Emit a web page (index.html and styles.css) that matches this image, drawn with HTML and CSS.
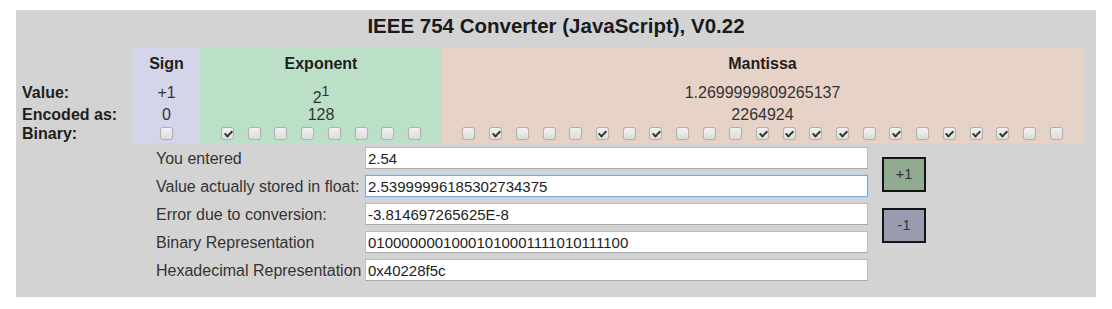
FILE: index.html
```html
<!DOCTYPE html>
<html>
<head>
<meta charset="utf-8">
<title>IEEE 754 Converter</title>
<link rel="stylesheet" href="styles.css">
</head>
<body>
<div class="panel">
  <div class="title">IEEE 754 Converter (JavaScript), V0.22</div>
  <div class="fields">
    <div class="col col-labels">
      <div class="r r-head"></div>
      <div class="r r-val">Value:</div>
      <div class="r r-enc">Encoded as:</div>
      <div class="r r-bin">Binary:</div>
    </div>
    <div class="col col-sign">
      <div class="r r-head">Sign</div>
      <div class="r r-val">+1</div>
      <div class="r r-enc">0</div>
      <div class="r r-bin"><span class="cb"></span></div>
    </div>
    <div class="col col-exp">
      <div class="r r-head">Exponent</div>
      <div class="r r-val exp-val"><span>2<sup>1</sup></span></div>
      <div class="r r-enc">128</div>
      <div class="r r-bin">
        <span class="cb on"></span><span class="cb"></span><span class="cb"></span><span class="cb"></span><span class="cb"></span><span class="cb"></span><span class="cb"></span><span class="cb"></span>
      </div>
    </div>
    <div class="col col-man">
      <div class="r r-head">Mantissa</div>
      <div class="r r-val">1.2699999809265137</div>
      <div class="r r-enc">2264924</div>
      <div class="r r-bin">
        <span class="cb"></span><span class="cb on"></span><span class="cb"></span><span class="cb"></span><span class="cb"></span><span class="cb on"></span><span class="cb"></span><span class="cb on"></span><span class="cb"></span><span class="cb"></span><span class="cb"></span><span class="cb on"></span><span class="cb on"></span><span class="cb on"></span><span class="cb on"></span><span class="cb"></span><span class="cb on"></span><span class="cb"></span><span class="cb on"></span><span class="cb on"></span><span class="cb on"></span><span class="cb"></span><span class="cb"></span>
      </div>
    </div>
  </div>
  <div class="io">
    <div class="io-grid">
      <label class="io-label">You entered</label>
      <input class="io-input" type="text" value="2.54">
      <label class="io-label">Value actually stored in float:</label>
      <input class="io-input focused" type="text" value="2.53999996185302734375">
      <label class="io-label">Error due to conversion:</label>
      <input class="io-input" type="text" value="-3.814697265625E-8">
      <label class="io-label">Binary Representation</label>
      <input class="io-input" type="text" value="01000000010001010001111010111100">
      <label class="io-label">Hexadecimal Representation</label>
      <input class="io-input" type="text" value="0x40228f5c">
    </div>
    <div class="btns">
      <button class="btn btn-plus">+1</button>
      <button class="btn btn-minus">-1</button>
    </div>
  </div>
</div>
</body>
</html>
```
FILE: styles.css
```css
html, body {
  margin: 0;
  padding: 0;
  background: #ffffff;
}
body {
  font-family: "Liberation Sans", Arial, sans-serif;
  color: #222;
}
.panel {
  margin: 10px 0 0 16px;
  width: 1080px;
  height: 287px;
  box-sizing: border-box;
  padding: 0 6px;
  background: #d3d3d3;
}
.title {
  height: 38px;
  line-height: 31px;
  text-align: center;
  font-weight: bold;
  font-size: 20.5px;
  color: #1a1a1a;
}
.fields {
  display: flex;
}
.col {
  display: flex;
  flex-direction: column;
}
.col-labels { width: 111px; font-weight: bold; font-size: 16px; color: #1e1e1e; }
.col-sign { width: 67px; background: #d5d5ea; }
.col-exp { width: 242px; background: #bbe0c7; }
.col-man { width: 641px; background: #e6d2c6; }
.r {
  display: flex;
  align-items: center;
  font-size: 16px;
  color: #333;
}
.col-labels .r { color: #1e1e1e; }
.col-sign .r, .col-exp .r, .col-man .r { justify-content: center; }
.r-head { height: 32px; font-weight: bold; color: #1e1e1e; }
.r-val { height: 26px; }
.exp-val { box-sizing: border-box; padding-top: 5px; }
.r-enc { height: 18px; }
.r-bin { height: 19px; gap: 13.7px; }
sup { font-size: 14px; vertical-align: 7px; line-height: 1; }
.cb {
  position: relative;
  width: 13px;
  height: 13px;
  box-sizing: border-box;
  border: 1px solid #b0b0b0;
  border-radius: 3px;
  background: linear-gradient(#f2f2f2, #dcdcdc);
  box-shadow: 0 0 1px rgba(0,0,0,0.15);
  flex: none;
}
.cb.on::after {
  content: "";
  position: absolute;
  left: 3.5px;
  top: 1px;
  width: 3px;
  height: 6px;
  border: solid #333;
  border-width: 0 2px 2px 0;
  transform: rotate(45deg);
}
.io {
  display: flex;
  margin: 4px 0 0 134px;
}
.io-grid {
  display: grid;
  grid-template-columns: 209px 503px;
  grid-auto-rows: 22px;
  row-gap: 6px;
}
.io-label {
  display: flex;
  align-items: center;
  padding-top: 1px;
  font-size: 16px;
  color: #333;
  white-space: nowrap;
}
.io-input {
  box-sizing: border-box;
  width: 503px;
  height: 22px;
  margin: 0;
  padding: 0 2px;
  border: 1px solid #bdbdbd;
  border-bottom-color: #a9a9a9;
  background: #fff;
  font-family: "Liberation Sans", Arial, sans-serif;
  font-size: 15px;
  color: #222;
  outline: none;
}
.io-input.focused {
  border: 1px solid #7aa9dc;
  box-shadow: 0 0 0 1px #b9d3ee;
}
.btns {
  display: flex;
  flex-direction: column;
  gap: 16px;
  margin: 10px 0 0 14px;
}
.btn {
  width: 44px;
  height: 35px;
  box-sizing: border-box;
  border: 2px solid #141414;
  padding: 0 0 2px;
  font-family: "Liberation Sans", Arial, sans-serif;
  font-size: 14.5px;
  color: #333;
  border-radius: 0;
}
.btn-plus { background: #91ab91; }
.btn-minus { background: #9b9bb0; }
```
